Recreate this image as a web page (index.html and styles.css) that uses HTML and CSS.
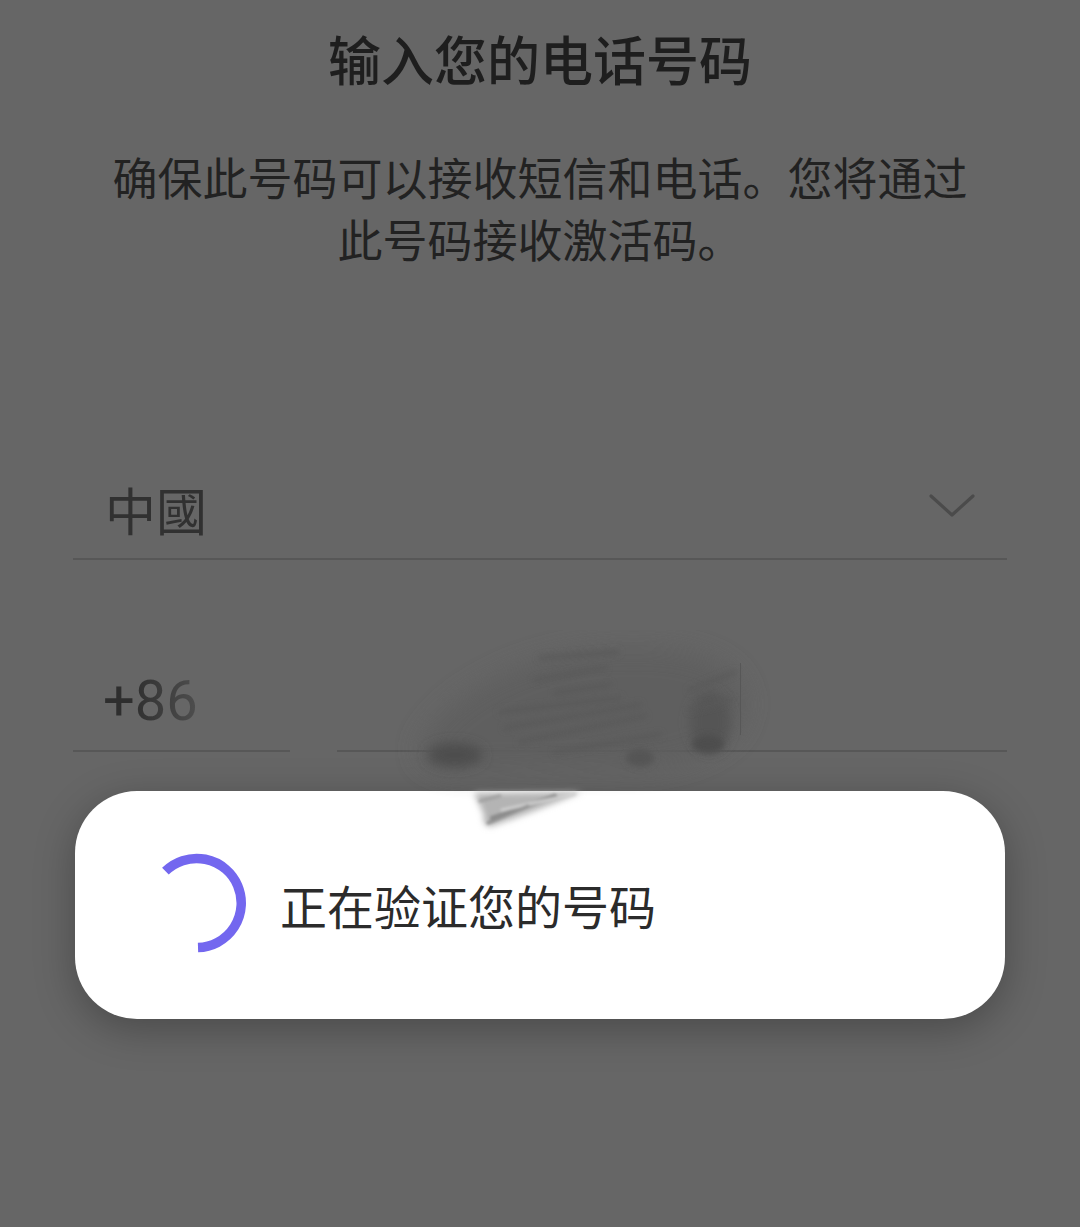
FILE: index.html
```html
<!DOCTYPE html>
<html lang="zh-CN">
<head>
<meta charset="utf-8">
<title>输入您的电话号码</title>
<link rel="stylesheet" href="styles.css">
</head>
<body>
<main class="page">
  <h1 class="title">输入您的电话号码</h1>
  <p class="subtitle">确保此号码可以接收短信和电话。您将通过<br>此号码接收激活码。</p>

  <div class="field country">
    <span class="country-name">中國</span>
    <svg class="chevron" width="48" height="28" viewBox="0 0 48 28" aria-hidden="true">
      <polyline points="3,4 24,23 45,4" fill="none" stroke="#4b4b4b" stroke-width="3.2" stroke-linecap="round" stroke-linejoin="round"/>
    </svg>
  </div>

  <div class="field phone">
    <span class="code">+<span class="code-digits">86</span></span>
  </div>
</main>

<div class="dialog">
  <svg class="spinner" width="100" height="100" viewBox="0 0 100 100" aria-hidden="true">
    <path d="M 18.4 18.2 A 44.6 44.6 0 1 1 51 94.6" fill="none" stroke="#7367ef" stroke-width="9.5"/>
  </svg>
  <span class="dialog-text">正在验证您的号码</span>
</div>

<svg class="scribble" width="520" height="230" viewBox="280 630 520 230" aria-hidden="true">
  <defs>
    <filter id="b12" x="-50%" y="-50%" width="200%" height="200%"><feGaussianBlur stdDeviation="12"/></filter>
    <filter id="b6" x="-50%" y="-50%" width="200%" height="200%"><feGaussianBlur stdDeviation="6"/></filter>
    <filter id="b3" x="-50%" y="-50%" width="200%" height="200%"><feGaussianBlur stdDeviation="3"/></filter>
    <filter id="b15" x="-50%" y="-50%" width="200%" height="200%"><feGaussianBlur stdDeviation="1.5"/></filter>
  </defs>
  <rect x="290" y="747" width="47" height="7" fill="#666666"/>
  <path d="M 420 745 C 440 700, 520 650, 620 648 C 690 645, 740 660, 745 700 C 748 740, 700 765, 640 768 L 470 772 C 430 772, 415 760, 420 745 Z" fill="#5e5e5e" filter="url(#b12)" opacity="0.9"/>
  <ellipse cx="455" cy="755" rx="28" ry="12" fill="#4e4e4e" filter="url(#b6)"/>
  <ellipse cx="710" cy="722" rx="20" ry="30" fill="#555555" filter="url(#b6)"/>
  <ellipse cx="708" cy="744" rx="16" ry="9" fill="#4d4d4d" filter="url(#b3)"/>
  <ellipse cx="640" cy="758" rx="14" ry="9" fill="#555555" filter="url(#b3)"/>
  <g stroke="#585858" stroke-width="4" fill="none" filter="url(#b3)" stroke-linecap="round">
    <line x1="540" y1="658" x2="618" y2="652"/>
    <line x1="535" y1="680" x2="605" y2="668"/>
    <line x1="555" y1="693" x2="610" y2="685"/>
    <line x1="500" y1="712" x2="620" y2="698"/>
    <line x1="505" y1="728" x2="640" y2="705"/>
    <line x1="520" y1="742" x2="645" y2="716"/>
    <line x1="555" y1="752" x2="660" y2="735"/>
    <line x1="690" y1="690" x2="735" y2="672"/>
    <line x1="690" y1="710" x2="732" y2="700"/>
  </g>
  <line x1="740.5" y1="663" x2="740.5" y2="735" stroke="#575757" stroke-width="1"/>
  <path d="M 474 793 L 582 792 C 555 803, 525 815, 492 826 C 486 828, 482 822, 484 815 Z" fill="#b4b4b4" filter="url(#b3)"/>
  <g filter="url(#b15)" stroke-linecap="round" fill="none">
    <line x1="492" y1="818" x2="555" y2="796" stroke="#8a8a8a" stroke-width="4"/>
    <line x1="502" y1="810" x2="575" y2="794" stroke="#d0d0d0" stroke-width="3"/>
    <line x1="488" y1="823" x2="528" y2="806" stroke="#909090" stroke-width="3"/>
    <line x1="480" y1="801" x2="500" y2="796" stroke="#a0a0a0" stroke-width="3"/>
  </g>
</svg>
</body>
</html>
```

FILE: styles.css
```css
html, body {
  margin: 0;
  padding: 0;
}

body {
  background: #666666;
  width: 1080px;
  height: 1227px;
  overflow: hidden;
  position: relative;
  font-family: "Noto Sans CJK SC", "Noto Sans", sans-serif;
}

.page {
  display: flex;
  flex-direction: column;
  align-items: stretch;
  padding: 24px 73px 0;
}

.title {
  margin: 0;
  text-align: center;
  font-size: 53px;
  line-height: 69px;
  font-weight: 500;
  color: #1e1e1e;
}

.subtitle {
  margin: 53px 0 0;
  text-align: center;
  font-size: 45px;
  line-height: 62px;
  font-weight: 400;
  color: #222222;
}

.field {
  display: flex;
  align-items: center;
  justify-content: space-between;
  height: 70px;
  padding: 0 31px 14px 32px;
  border-bottom: 2px solid #575757;
}

.country {
  margin-top: 204px;
}

.country-name {
  font-size: 51px;
  line-height: 70px;
  color: #313131;
}

.chevron {
  display: block;
  margin-top: -6px;
}

.phone {
  margin-top: 106px;
  padding-left: 30px;
}

.code {
  font-family: Roboto, "Liberation Sans", sans-serif;
  font-size: 56px;
  line-height: 70px;
  color: #2e2e2e;
}

.code-digits {
  background: linear-gradient(90deg, #303030, #4e4e4e);
  -webkit-background-clip: text;
  background-clip: text;
  color: transparent;
}

.dialog {
  position: absolute;
  left: 75px;
  top: 791px;
  width: 930px;
  height: 228px;
  box-sizing: border-box;
  background: #ffffff;
  border-radius: 62px;
  box-shadow: 0 10px 40px rgba(0, 0, 0, 0.28);
  display: flex;
  align-items: center;
  padding-left: 72px;
  gap: 33px;
}

.spinner {
  display: block;
  margin-top: -4px;
}

.dialog-text {
  font-size: 47px;
  line-height: 60px;
  color: #2b2b2b;
}

.scribble {
  position: absolute;
  left: 280px;
  top: 630px;
  pointer-events: none;
}
```
